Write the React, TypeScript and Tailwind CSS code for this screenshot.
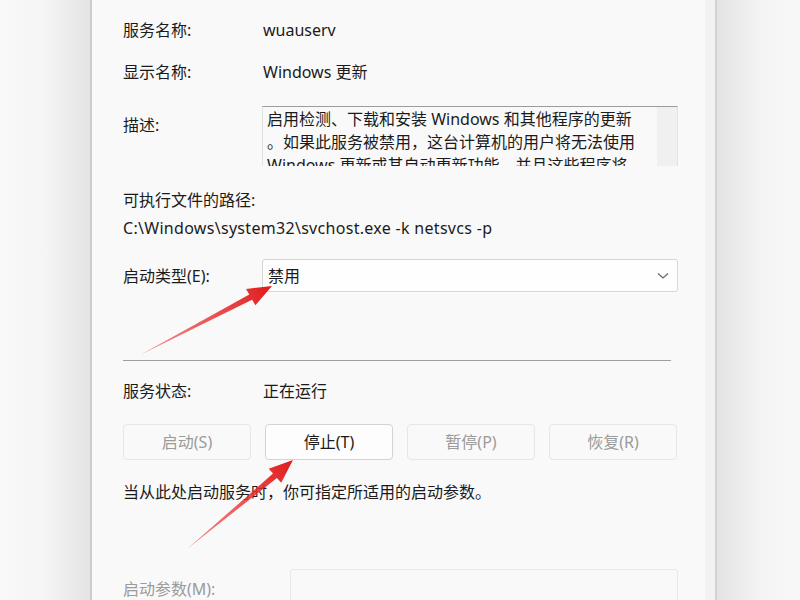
import React from 'react';

const Arrows = () => (
  <svg className="pointer-events-none absolute inset-0" width="800" height="600" viewBox="0 0 800 600">
    <defs>
      <linearGradient id="ar1" x1="140" y1="355" x2="272" y2="286" gradientUnits="userSpaceOnUse">
        <stop offset="0" stopColor="#f04a4a" stopOpacity="0.6" />
        <stop offset="1" stopColor="#e0191b" />
      </linearGradient>
      <linearGradient id="ar2" x1="187" y1="549" x2="293" y2="460" gradientUnits="userSpaceOnUse">
        <stop offset="0" stopColor="#f04a4a" stopOpacity="0.6" />
        <stop offset="1" stopColor="#e0191b" />
      </linearGradient>
    </defs>
    <polygon
      fill="url(#ar1)"
      points="140,355 252.1,299.8 255.4,305.2 272,286 246,289 249.3,294.4"
    />
    <polygon
      fill="url(#ar2)"
      points="187,549 276.9,478.1 281.2,482.8 293,460 268.7,468.8 273,473.5"
    />
  </svg>
);

const Button = ({ label, enabled }: { label: string; enabled?: boolean }) => (
  <div
    className={
      enabled
        ? 'flex h-[36px] w-[128px] items-center justify-center rounded-[4px] border border-[#d4d4d4] bg-[#fdfdfd] text-[#1b1b1b]'
        : 'flex h-[36px] w-[128px] items-center justify-center rounded-[4px] border border-[#e6e6e6] bg-[#f9f9f9] text-[#9b9b9b]'
    }
  >
    {label}
  </div>
);

export default function App() {
  return (
    <div className="relative flex h-[600px] w-[800px] overflow-hidden bg-[#f8f8f8] font-['Noto_Sans','Noto_Sans_CJK_SC',sans-serif] text-[16px] text-[#1b1b1b]">
      {/* left backdrop */}
      <div className="h-full w-[90px] bg-gradient-to-r from-[#f9f9f9] via-[#f5f5f5] to-[#e4e4e4]" />
      <div className="h-full w-[2px] bg-[#cdcdcd]" />

      {/* dialog page */}
      <div className="h-full w-[613px] bg-[#f9f9f9] pl-[31px] pt-[19px]">
        <div className="flex h-[22px] items-center">
          <div className="w-[140px]">服务名称:</div>
          <div>wuauserv</div>
        </div>
        <div className="mt-[20px] flex h-[22px] items-center">
          <div className="w-[140px]">显示名称:</div>
          <div>Windows 更新</div>
        </div>

        <div className="mt-[23px] flex">
          <div className="w-[139px] pt-[8px] leading-[22px]">描述:</div>
          <div className="relative h-[60px] w-[416px] overflow-hidden border-t border-l border-r border-t-[#9c9c9c] border-l-[#e2e2e2] border-r-[#e2e2e2] bg-[#f9f9f9] pl-[4px] pt-[1px] leading-[23px]">
            <div className="whitespace-nowrap">启用检测、下载和安装 Windows 和其他程序的更新</div>
            <div className="whitespace-nowrap">。如果此服务被禁用，这台计算机的用户将无法使用</div>
            <div className="whitespace-nowrap">Windows 更新或其自动更新功能，并且这些程序将</div>
            <div className="absolute right-0 top-0 h-full w-[20px] bg-[#f0f0f0]" />
          </div>
        </div>

        <div className="mt-[23px] flex h-[22px] items-center">可执行文件的路径:</div>
        <div className="mt-[6px] flex h-[22px] items-center tracking-[0.3px]">C:\Windows\system32\svchost.exe -k netsvcs -p</div>

        <div className="mt-[20px] flex items-center">
          <div className="w-[139px]">启动类型(E):</div>
          <div className="flex h-[33px] w-[416px] items-center justify-between rounded-[3px] border border-[#d6d6d6] bg-[#fefefe] pl-[5px] pr-[8px]">
            <span>禁用</span>
            <svg width="12" height="8" viewBox="0 0 12 8">
              <path d="M1 1.5 L6 6 L11 1.5" fill="none" stroke="#6a6a6a" strokeWidth="1.3" />
            </svg>
          </div>
        </div>

        <div className="mt-[68px] h-px w-[548px] bg-[#9e9e9e]" />

        <div className="mt-[19px] flex h-[22px] items-center">
          <div className="w-[140px]">服务状态:</div>
          <div>正在运行</div>
        </div>

        <div className="mt-[22px] flex gap-[14px]">
          <Button label="启动(S)" />
          <Button label="停止(T)" enabled />
          <Button label="暂停(P)" />
          <Button label="恢复(R)" />
        </div>

        <div className="mt-[21px] flex h-[22px] items-center">当从此处启动服务时，你可指定所适用的启动参数。</div>

        <div className="mt-[66px] flex items-center">
          <div className="w-[167px] text-[#9b9b9b]">启动参数(M):</div>
          <div className="h-[40px] w-[388px] rounded-[3px] border border-[#e8e8e8] bg-[#f9f9f9]" />
        </div>
      </div>

      {/* right backdrop */}
      <div className="h-full w-[10px] bg-[#f2f2f2]" />
      <div className="h-full w-[2px] bg-[#d2d2d2]" />
      <div className="h-full flex-1 bg-gradient-to-r from-[#e3e3e3] via-[#f3f3f3] to-[#f8f8f8]" />

      <Arrows />
    </div>
  );
}
